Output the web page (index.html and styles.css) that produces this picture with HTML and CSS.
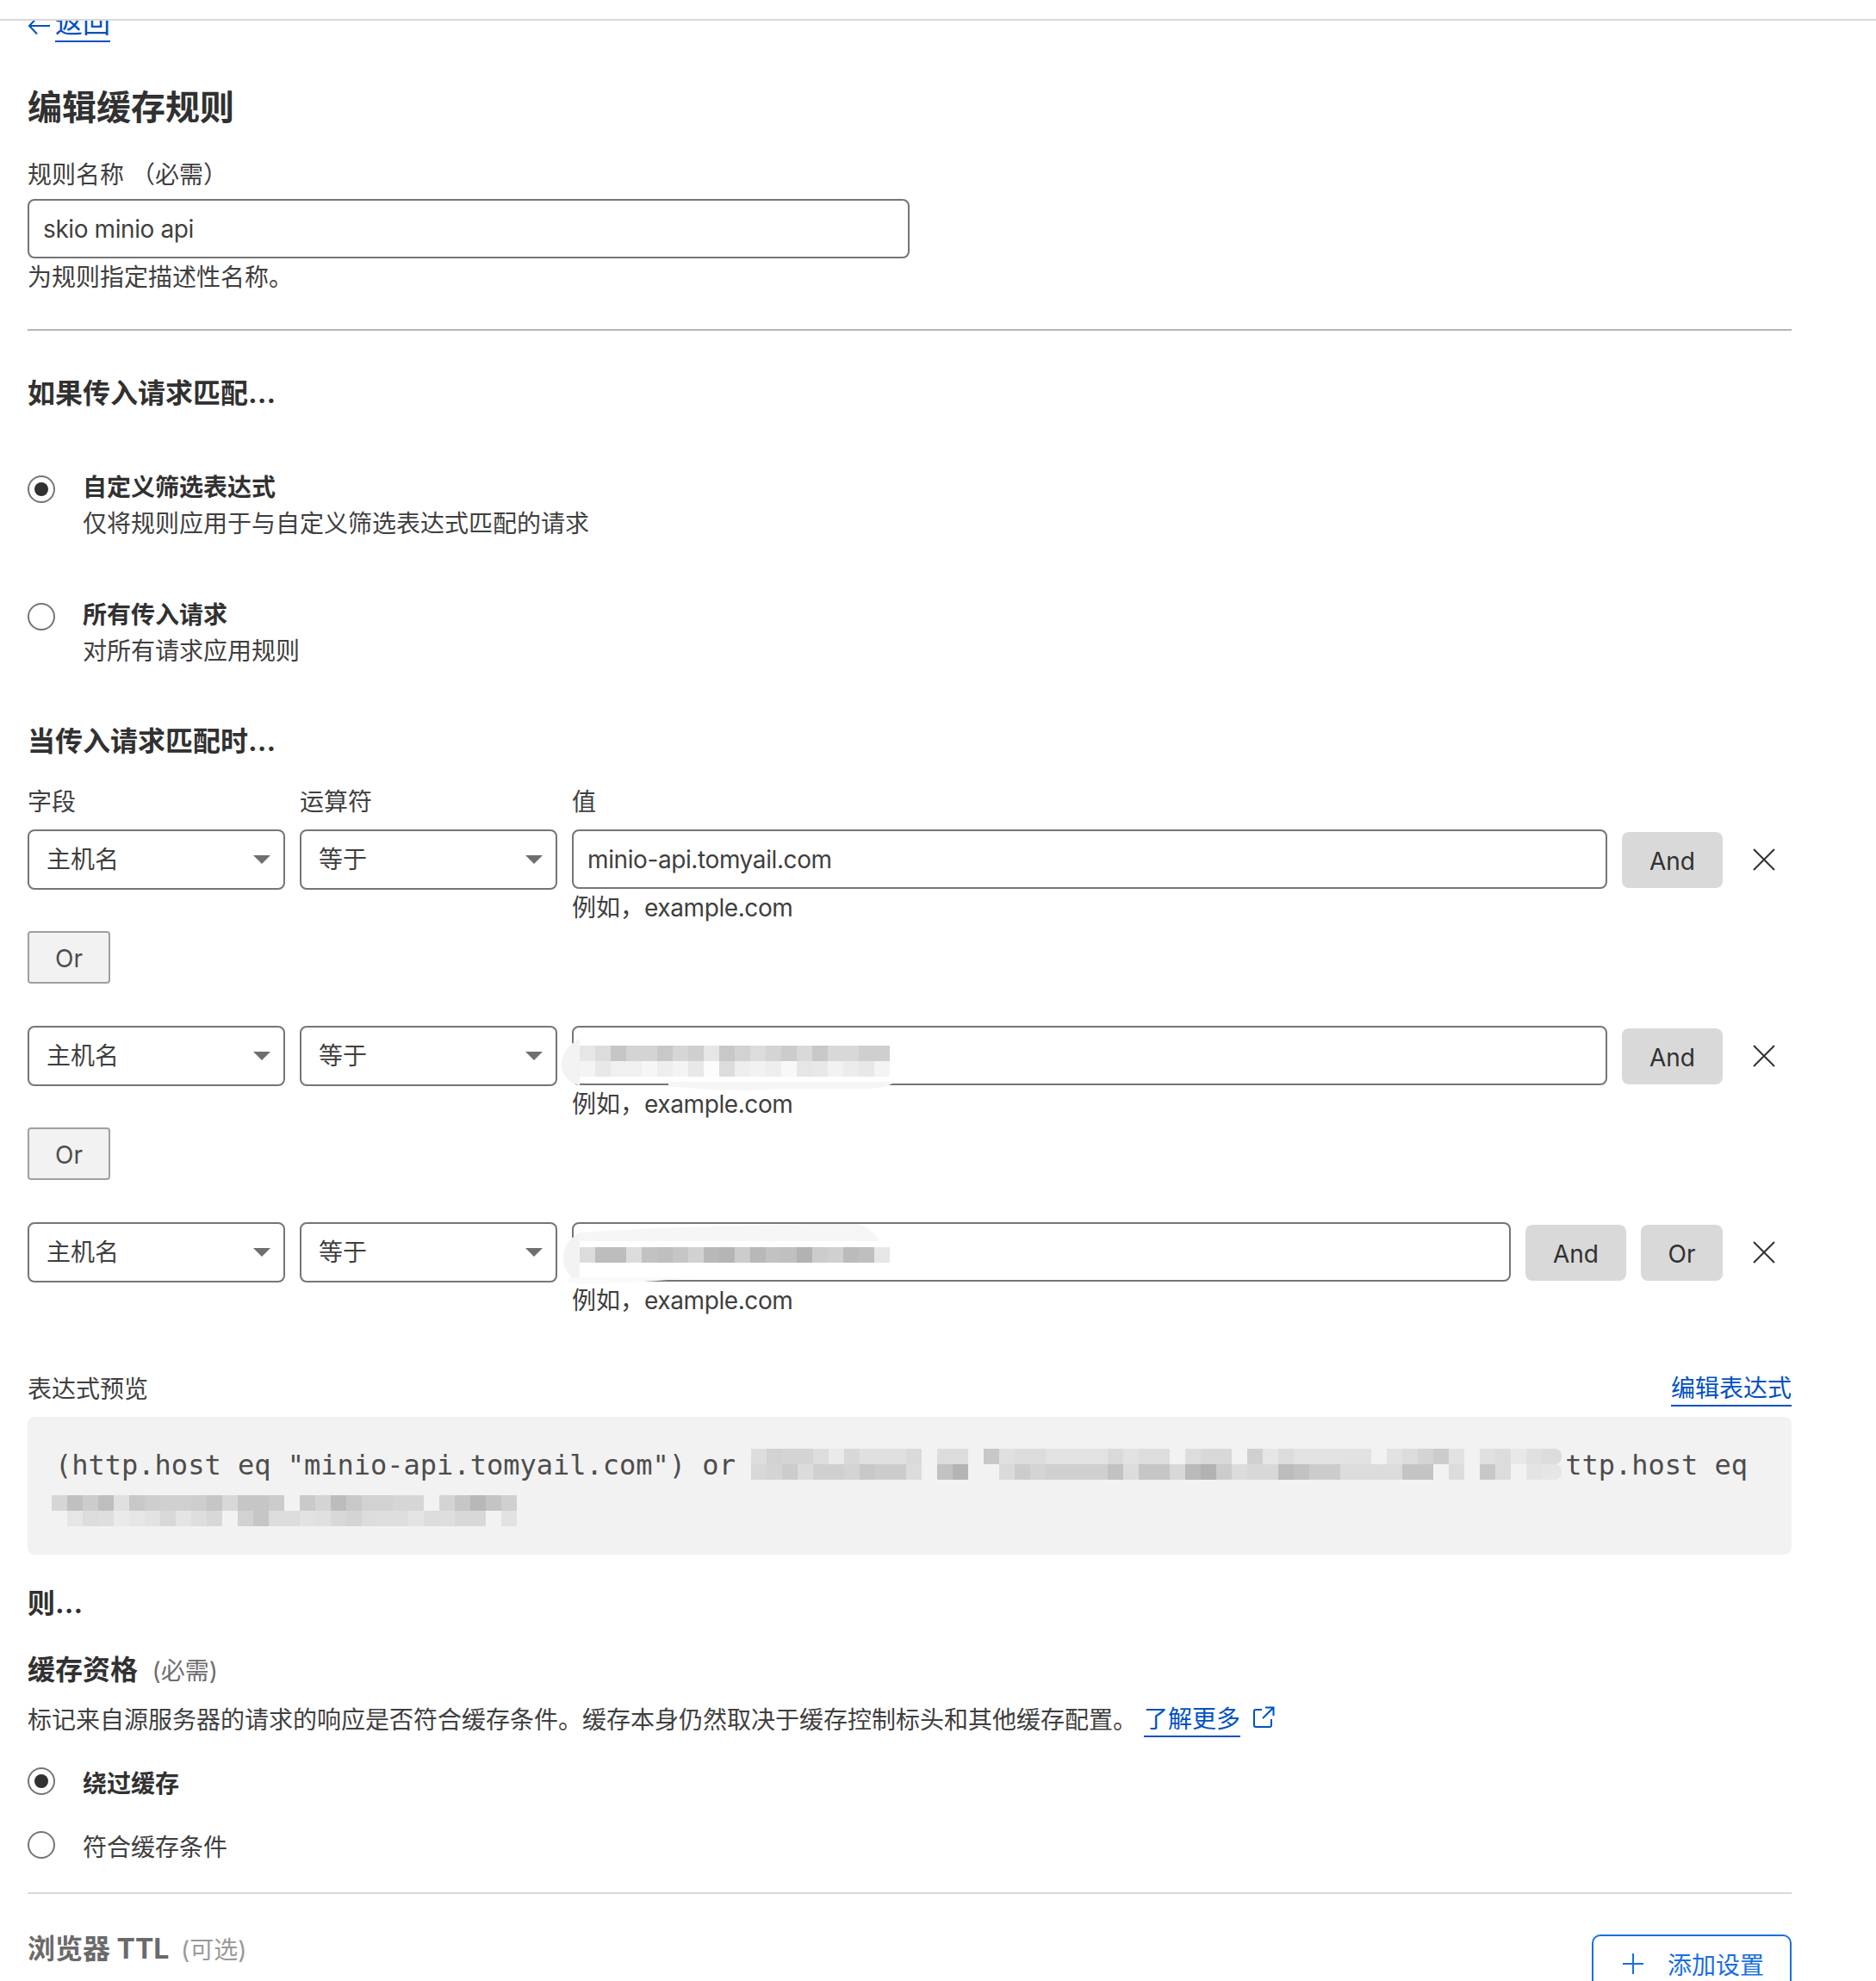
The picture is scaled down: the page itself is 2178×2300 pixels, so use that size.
FILE: index.html
```html
<!DOCTYPE html>
<html lang="zh-CN">
<head>
    <meta charset="UTF-8">
    <meta name="viewport" content="width=device-width, initial-scale=1.0">
    <title>编辑缓存规则</title>
    <link rel="stylesheet" href="styles.css">
</head>
<body>
    <div class="topbar"></div>
    <div class="scroller">
        <main class="page">
            <div class="back">
                <svg class="back-arrow" width="27" height="22" viewBox="0 0 27 22"><path d="M26 11H2M11 1.500L2 11l9 9.500"/></svg>
                <a class="link back-link" href="#">返回</a>
            </div>

            <h1>编辑缓存规则</h1>

            <label class="label rule-label">规则名称 （必需）</label>
            <input class="text-input name-input" type="text" value="skio minio api">
            <p class="help">为规则指定描述性名称。</p>

            <hr class="divider divider-dark">

            <h2 class="match-title">如果传入请求匹配...</h2>

            <div class="radio-row first-radio">
                <span class="radio checked"></span>
                <div>
                    <div class="radio-title">自定义筛选表达式</div>
                    <div class="radio-desc">仅将规则应用于与自定义筛选表达式匹配的请求</div>
                </div>
            </div>
            <div class="radio-row second-radio">
                <span class="radio"></span>
                <div>
                    <div class="radio-title">所有传入请求</div>
                    <div class="radio-desc">对所有请求应用规则</div>
                </div>
            </div>

            <h2 class="when-title">当传入请求匹配时...</h2>

            <div class="field-labels">
                <span class="col-select">字段</span>
                <span class="col-select">运算符</span>
                <span>值</span>
            </div>

            <div class="condition">
                <div class="select">主机名</div>
                <div class="select">等于</div>
                <div class="value">
                    <input class="text-input" type="text" value="minio-api.tomyail.com">
                    <p class="help">例如，<span class="latin">example.com</span></p>
                </div>
                <button class="logic">And</button>
                <button class="remove"><svg width="26" height="26" viewBox="0 0 26 26"><path d="M1 1l24 24M25 1L1 25"/></svg></button>
            </div>
            <button class="or-btn">Or</button>

            <div class="condition next">
                <div class="select">主机名</div>
                <div class="select">等于</div>
                <div class="value">
                    <input class="text-input" type="text">
                    <svg class="smudge smudge-a" width="400" height="72" viewBox="0 0 400 72">
                        <path d="M22 9C8 16 1 28 1 38c0 12 6 21 20 25l1 0Z" fill="#f3f3f3"/>
                        <path d="M125 59H387q-4 6-30 8H250q-40 5-125-3Z" fill="#f6f6f6"/>
                    </svg>
                    <div class="mosaic mosaic-row" data-rows="e6 dc c6 d4 d4 c8 d6 cf e6 c8 d2 dc d4 cc d9 c8 d8 d8 cf cf|f4 e8 f0 f0 f6 ee f4 e8 fc dc ee f2 ee f8 e6 e8 f2 ec e8 f4"></div>
                    <p class="help">例如，<span class="latin">example.com</span></p>
                </div>
                <button class="logic">And</button>
                <button class="remove"><svg width="26" height="26" viewBox="0 0 26 26"><path d="M1 1l24 24M25 1L1 25"/></svg></button>
            </div>
            <button class="or-btn">Or</button>

            <div class="condition next">
                <div class="select">主机名</div>
                <div class="select">等于</div>
                <div class="value">
                    <input class="text-input" type="text">
                    <svg class="smudge smudge-b" width="400" height="76" viewBox="0 0 400 76">
                        <path d="M22 12C8 20 3 30 3 42c0 12 7 22 19 26Z" fill="#f3f3f3"/>
                        <path d="M22 12C120 6 220 2 340 2c14 0 22 8 30 20H22Z" fill="#f6f6f6"/>
                        <path d="M9 64H160q-60 6-140 8L9 70Z" fill="#fafafa"/>
                    </svg>
                    <div class="mosaic mosaic-row" data-rows="dc bd bd dc c2 bf c6 d2 b9 b5 cc b8 c2 c0 b2 cc d0 bb bf e6"></div>
                    <p class="help">例如，<span class="latin">example.com</span></p>
                </div>
                <button class="logic">And</button>
                <button class="logic logic-or">Or</button>
                <button class="remove"><svg width="26" height="26" viewBox="0 0 26 26"><path d="M1 1l24 24M25 1L1 25"/></svg></button>
            </div>

            <div class="preview-head">
                <span>表达式预览</span>
                <a class="link" href="#">编辑表达式</a>
            </div>
            <div class="code-box">
                <div class="code">(http.host eq "minio-api.tomyail.com") or                                                  ttp.host eq</div>
                <div class="mosaic mosaic-code1" data-rows="dd d2 d4 d4 dd ea d8 e0 e0 e0 da -- dc dc -- c8 e0 dc dc e2 e2 e2 e2 da e2 dd dd -- dd d8 d8 -- d0 e6 dc e2 e2 e2 e2 e2 -- e2 dc d4 cc e2 -- e0 dc e8 e0 dc|d8 d4 cc dc d0 d0 d4 c8 cc cc dc -- c2 b4 -- -- da cc d4 d0 d0 d0 d0 c2 dc c6 c6 d8 ba b2 cc dc d8 d8 bc c2 cc cc dc dc dc dc c4 c4 -- dc -- c8 dc -- e4 e6"></div>
                <div class="mosaic mosaic-code2" data-rows="d6 c0 cc be e0 c8 ce d0 d0 ce c6 d8 c6 c6 cc -- ca d4 bc c8 d2 d2 d6 d6 -- d4 c6 b8 c4 d0|-- e6 dc de ea e6 e2 d8 e4 de d8 -- d2 c6 dc dc e2 e0 d8 d4 dc de de e4 dc de d8 d8 -- e2"></div>
            </div>

            <h2 class="then-title">则...</h2>

            <h2 class="eligibility-title">缓存资格 <span class="note">(必需)</span></h2>
            <div class="eligibility-desc">
                <span>标记来自源服务器的请求的响应是否符合缓存条件。缓存本身仍然取决于缓存控制标头和其他缓存配置。</span>
                <a class="link more-link" href="#">了解更多</a>
                <svg class="external" width="26" height="26" viewBox="0 0 26 26"><path d="M11 4H4a2 2 0 0 0-2 2v16a2 2 0 0 0 2 2h16a2 2 0 0 0 2-2v-7M15 1.500h9.500V11M24 2L12 14"/></svg>
            </div>

            <div class="option first-option">
                <span class="radio checked"></span>
                <span class="radio-title">绕过缓存</span>
            </div>
            <div class="option">
                <span class="radio"></span>
                <span class="option-text">符合缓存条件</span>
            </div>

            <hr class="divider ttl-divider">

            <div class="ttl-row">
                <h2 class="ttl-title">浏览器 TTL <span class="note note-light">(可选)</span></h2>
                <button class="add-btn">
                    <svg width="24" height="24" viewBox="0 0 24 24"><path d="M12 0v24M0 12h24"/></svg>
                    添加设置
                </button>
            </div>
        </main>
    </div>
    <script src="mosaic.js"></script>
</body>
</html>
```

FILE: styles.css
```css
* {
    margin: 0;
    padding: 0;
    box-sizing: border-box;
}

html, body {
    height: 2300px;
    overflow: hidden;
}

body {
    font-family: Inter, "Noto Sans CJK SC", sans-serif;
    font-size: 28px;
    line-height: 40px;
    color: #3f3f3f;
    background: #fff;
}

.topbar {
    height: 24px;
    background: #fff;
    border-bottom: 2px solid #d9d9d9;
}

.scroller {
    height: 2276px;
    overflow: hidden;
}

.page {
    width: 2080px;
    padding-left: 32px;
    margin-top: -17px;
}

.link {
    color: #0051c3;
    text-decoration: none;
    display: inline-block;
    line-height: 38px;
    border-bottom: 2px solid #0051c3;
}

.latin {
    letter-spacing: -0.4px;
}

.back {
    display: flex;
    align-items: center;
}

.back-arrow {
    margin-top: 4px;
    margin-right: 5px;
}

.back-arrow path {
    fill: none;
    stroke: #0051c3;
    stroke-width: 2;
}

.back-link {
    font-size: 32px;
    line-height: 40px;
}

h1 {
    font-size: 40px;
    line-height: 56px;
    font-weight: 700;
    color: #313131;
    margin-top: 48px;
}

h2 {
    font-size: 32px;
    line-height: 44px;
    font-weight: 700;
    color: #313131;
}

.label {
    display: block;
}

.rule-label {
    margin-top: 30px;
}

.text-input {
    display: block;
    width: 100%;
    height: 69px;
    padding: 0 16px;
    font: inherit;
    letter-spacing: -0.4px;
    color: #3f3f3f;
    background: #fff;
    border: 2px solid #757575;
    border-radius: 8px;
    outline: none;
}

.name-input {
    width: 1024px;
    margin-top: 8px;
}

.help {
    margin-top: 2px;
}

.divider {
    border: none;
    height: 2px;
    width: 2048px;
    background: #b6b6b6;
}

.divider-dark {
    margin-top: 40px;
}

.match-title {
    margin-top: 51px;
}

.radio-row {
    display: flex;
    gap: 32px;
}

.first-radio {
    margin-top: 66px;
}

.second-radio {
    margin-top: 64px;
}

.radio {
    flex: none;
    display: flex;
    align-items: center;
    justify-content: center;
    width: 32px;
    height: 32px;
    margin-top: 7px;
    border: 2px solid #757575;
    border-radius: 50%;
    background: #fff;
}

.radio.checked::after {
    content: "";
    width: 16px;
    height: 16px;
    border-radius: 50%;
    background: #313131;
}

.radio-title {
    font-weight: 700;
    line-height: 42px;
    color: #313131;
}

.radio-desc {
    line-height: 42px;
}

.when-title {
    margin-top: 62px;
}

.field-labels {
    display: flex;
    gap: 17px;
    margin-top: 28px;
}

.col-select {
    width: 299px;
}

.condition {
    display: flex;
    align-items: flex-start;
    gap: 17px;
    width: 2048px;
    margin-top: 12px;
}

.condition.next {
    margin-top: 49px;
}

.select {
    position: relative;
    flex: none;
    width: 299px;
    height: 70px;
    padding: 0 20px;
    line-height: 67px;
    background: #fff;
    border: 2px solid #757575;
    border-radius: 8px;
}

.select::after {
    content: "";
    position: absolute;
    right: 15px;
    top: 28px;
    border-left: 10px solid transparent;
    border-right: 10px solid transparent;
    border-top: 10px solid #6f6f6f;
}

.value {
    position: relative;
    flex: 1;
}

.value .help {
    margin-top: 2px;
}

.smudge {
    position: absolute;
    left: -13px;
    top: 6px;
}

.smudge-b {
    top: 0;
    left: -13px;
}

.mosaic {
    position: absolute;
}

.mosaic-row {
    left: 9px;
    top: 23px;
}

.smudge-b + .mosaic-row {
    top: 29px;
}

.mosaic-line {
    display: flex;
    height: 18px;
}

.mosaic-line i {
    display: block;
    width: 18px;
    height: 18px;
}

.mosaic-code1 .mosaic-line i:last-child {
    width: 23px;
    border-radius: 0 8px 8px 0;
}

button {
    font-family: inherit;
}

.logic {
    flex: none;
    width: 117px;
    height: 65px;
    margin-top: 3px;
    padding-top: 2px;
    font-size: 28px;
    color: #313131;
    background: #d9d9d9;
    border: none;
    border-radius: 8px;
}

.logic-or {
    width: 95px;
}

.remove {
    flex: none;
    display: flex;
    align-items: center;
    justify-content: center;
    width: 63px;
    height: 69px;
    padding-right: 2px;
    background: none;
    border: none;
}

.remove path {
    fill: none;
    stroke: #313131;
    stroke-width: 2;
}

.or-btn {
    display: block;
    width: 96px;
    height: 61px;
    margin-top: 7px;
    padding-top: 2px;
    font-size: 28px;
    color: #4d4d4d;
    background: #f2f2f2;
    border: 2px solid #a0a0a0;
    border-radius: 4px;
}

.preview-head {
    display: flex;
    justify-content: space-between;
    width: 2048px;
    margin-top: 63px;
}

.code-box {
    position: relative;
    width: 2048px;
    height: 160px;
    margin-top: 12px;
    padding: 30px 32px;
    background: #f2f2f2;
    border-radius: 8px;
}

.code {
    font-family: "DejaVu Sans Mono", monospace;
    font-size: 32px;
    line-height: 52px;
    color: #4d4d4d;
    white-space: pre;
}

.mosaic-code1 {
    left: 840px;
    top: 37px;
}

.mosaic-code2 {
    left: 28px;
    top: 91px;
}

.then-title {
    margin-top: 35px;
}

.eligibility-title {
    margin-top: 33px;
}

.note {
    font-size: 28px;
    font-weight: 400;
    color: #6e6e6e;
    margin-left: 9px;
}

.note-light {
    color: #999;
    margin-left: 6px;
}

.eligibility-desc {
    display: flex;
    align-items: center;
    margin-top: 15px;
    white-space: nowrap;
}

.more-link {
    margin-left: 8px;
}

.external {
    margin-left: 14px;
    margin-top: -7px;
}

.external path {
    fill: none;
    stroke: #0051c3;
    stroke-width: 2;
}

.option {
    display: flex;
    gap: 32px;
    margin-top: 32px;
    line-height: 42px;
}

.first-option {
    margin-top: 33px;
}

.option .radio {
    margin-top: 2px;
}

.ttl-divider {
    margin-top: 31px;
    background: #d9d9d9;
}

.ttl-row {
    display: flex;
    justify-content: space-between;
    align-items: flex-start;
    width: 2048px;
    margin-top: 47px;
}

.ttl-title {
    line-height: 34px;
    color: #6a6a6a;
}

.add-btn {
    display: flex;
    align-items: center;
    gap: 28px;
    width: 232px;
    height: 68px;
    padding-left: 34px;
    font-size: 28px;
    color: #1a6ee0;
    background: #fff;
    border: 2px solid #1a6ee0;
    border-radius: 10px;
}

.add-btn path {
    fill: none;
    stroke: #1a6ee0;
    stroke-width: 2;
}
```

FILE: mosaic.js
```js
// builds the pixelated blocks from their data-rows shades
document.querySelectorAll('.mosaic').forEach((box) => {
    box.dataset.rows.split('|').forEach((row) => {
        const line = document.createElement('div');
        line.className = 'mosaic-line';
        row.split(' ').forEach((shade) => {
            const cell = document.createElement('i');
            if (shade !== '--') {
                cell.style.background = `#${shade}${shade}${shade}`;
            }
            line.appendChild(cell);
        });
        box.appendChild(line);
    });
});
```
